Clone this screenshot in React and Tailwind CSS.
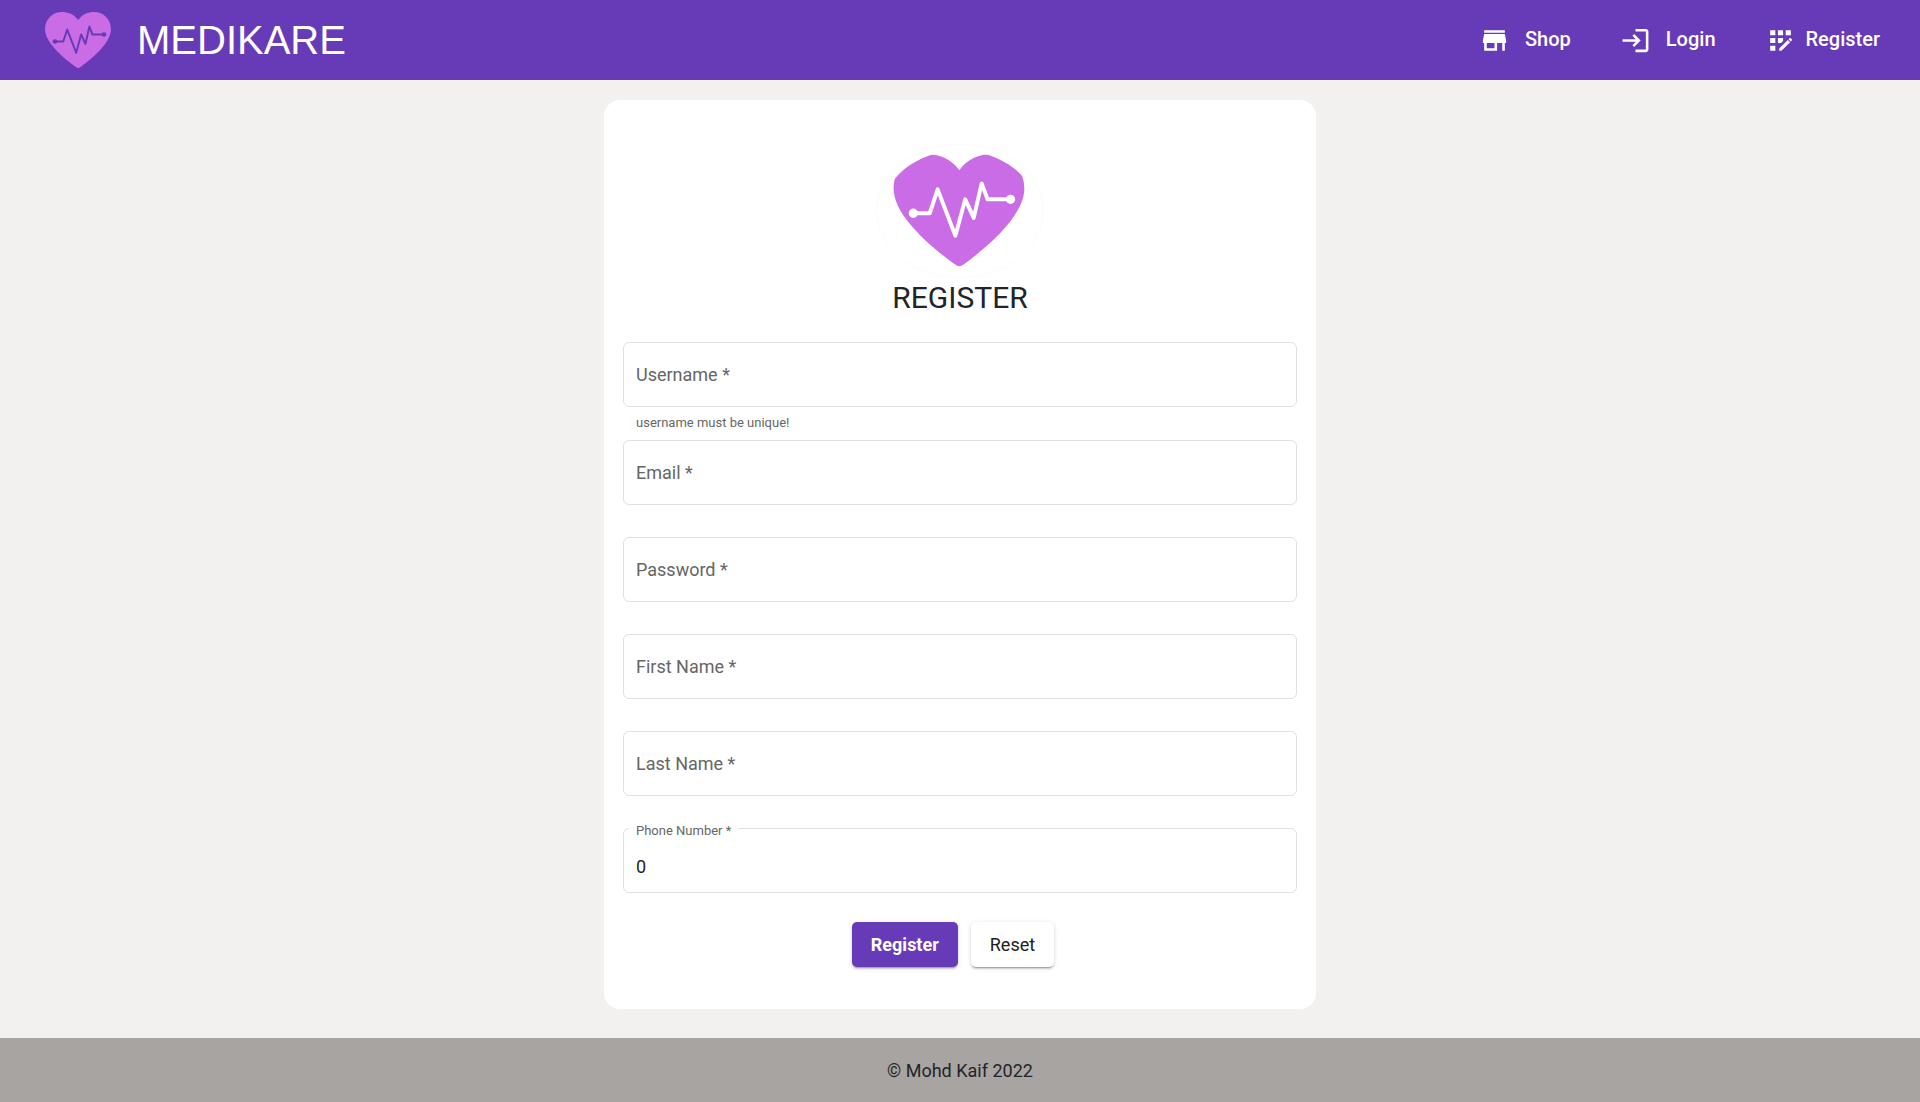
import { MdAppRegistration, MdLogin, MdStore } from "react-icons/md";

function HeartShape({ line }) {
  return (
    <>
      <path
        d="M235 60C248 42 266 36 283 36C312 36 334 58 334 88C334 124 290 167 242 202Q238 205 235 205Q232 205 228 202C180 167 135 124 135 88C135 58 157 36 186 36C204 36 222 42 235 60Z"
        fill="#ca6ce6"
      />
      <path
        d="M165 125H190L202 89L229 159L244 104L257 132L269 80L278 104H313"
        fill="none"
        stroke={line}
        strokeWidth="6"
        strokeLinejoin="round"
      />
      <circle cx="165" cy="125" r="7" fill={line} />
      <circle cx="313" cy="104" r="7" fill={line} />
    </>
  );
}

function HeaderLogo() {
  return (
    <svg className="h-14 w-[66px]" viewBox="135 36 199 169" aria-hidden="true">
      <HeartShape line="#673ab7" />
    </svg>
  );
}

function CardLogo() {
  return (
    <svg className="h-[134px] w-[168px]" viewBox="48 40 504 402" aria-hidden="true">
      <defs>
        <clipPath id="logo-oval">
          <ellipse cx="299" cy="242" rx="231" ry="182" />
        </clipPath>
      </defs>
      <ellipse cx="300" cy="241" rx="250" ry="200" fill="#fff" stroke="#fbfbfb" strokeWidth="3" />
      <g clipPath="url(#logo-oval)">
        <g transform="translate(-165 -1) scale(1.97 1.99)">
          <HeartShape line="#fff" />
        </g>
      </g>
    </svg>
  );
}

const fieldClass =
  "h-[65px] w-full rounded-[6px] border border-[#e0e0e0] bg-white px-3 text-lg text-[#212529] outline-none focus:border-[#673ab7]";

const fields = [
  { id: "username", label: "Username *", type: "text", hint: "username must be unique!" },
  { id: "email", label: "Email *", type: "email" },
  { id: "password", label: "Password *", type: "password" },
  { id: "first-name", label: "First Name *", type: "text" },
  { id: "last-name", label: "Last Name *", type: "text" },
];

function Field({ id, label, type, hint }) {
  return (
    <div className={hint ? "min-h-[98px]" : "min-h-[97px]"}>
      <div className="relative">
        <input id={id} type={type} placeholder=" " className={`${fieldClass} peer block`} />
        <label
          htmlFor={id}
          className="pointer-events-none invisible absolute inset-y-0 left-[13px] flex items-center text-lg text-[#666] peer-placeholder-shown:visible"
        >
          {label}
        </label>
      </div>
      {hint && <p className="px-[13px] pt-1.5 text-[13px] leading-5 text-[#666]">{hint}</p>}
    </div>
  );
}

export default function App() {
  return (
    <div className="flex min-h-screen flex-col bg-[#f2f1ef] font-['Roboto',sans-serif] text-[#212529]">
      <header className="flex h-20 items-center justify-between bg-[#673ab7] pl-[45px] pr-10 text-white">
        <a href="#" className="flex items-center gap-[26px]">
          <HeaderLogo />
          <span className="pb-px font-['Liberation_Sans',sans-serif] text-[40px] leading-none">MEDIKARE</span>
        </a>
        <nav className="flex items-center gap-[49px] text-xl font-medium">
          <a href="#shop" className="flex items-center gap-[15px]">
            <MdStore className="size-[31px]" />
            <span className="pb-0.5">Shop</span>
          </a>
          <a href="#login" className="flex items-center gap-[15px]">
            <MdLogin className="size-[31px]" />
            <span className="pb-0.5">Login</span>
          </a>
          <a href="#register" className="flex items-center gap-[10px]">
            <MdAppRegistration className="size-[31px]" />
            <span className="pb-0.5">Register</span>
          </a>
        </nav>
      </header>

      <main className="flex-1 px-4 pt-5 pb-7">
        <section className="mx-auto flex w-full max-w-[712px] flex-col items-center rounded-[16px] bg-white px-[19px] pt-11 pb-[42px]">
          <CardLogo />
          <h1 className="text-[30px] leading-10">REGISTER</h1>
          <form className="mt-6 w-full">
            {fields.map((field) => (
              <Field key={field.id} {...field} />
            ))}
            <div className="relative">
              <label
                htmlFor="phone"
                className="absolute -top-[7px] left-1.5 bg-white px-[7px] text-[13px] leading-5 text-[#666]"
              >
                Phone Number *
              </label>
              <input
                id="phone"
                type="text"
                inputMode="numeric"
                defaultValue="0"
                className={`${fieldClass} block pt-3`}
              />
            </div>
            <div className="mt-[29px] flex justify-center gap-[13px] pr-3.5">
              <button
                type="submit"
                className="h-[45px] rounded-[5px] bg-[#673ab7] px-[19px] text-lg font-bold text-white shadow-[0_3px_1px_-2px_rgba(0,0,0,0.2),0_2px_2px_rgba(0,0,0,0.14),0_1px_5px_rgba(0,0,0,0.12)]"
              >
                Register
              </button>
              <button
                type="reset"
                className="h-[45px] rounded-[5px] bg-white px-[19px] text-lg text-[#212121] shadow-[0_3px_1px_-2px_rgba(0,0,0,0.2),0_2px_2px_rgba(0,0,0,0.14),0_1px_5px_rgba(0,0,0,0.12)]"
              >
                Reset
              </button>
            </div>
          </form>
        </section>
      </main>

      <footer className="flex h-16 items-center justify-center bg-[#a8a4a2] pt-0.5 text-lg">© Mohd Kaif 2022</footer>
    </div>
  );
}
